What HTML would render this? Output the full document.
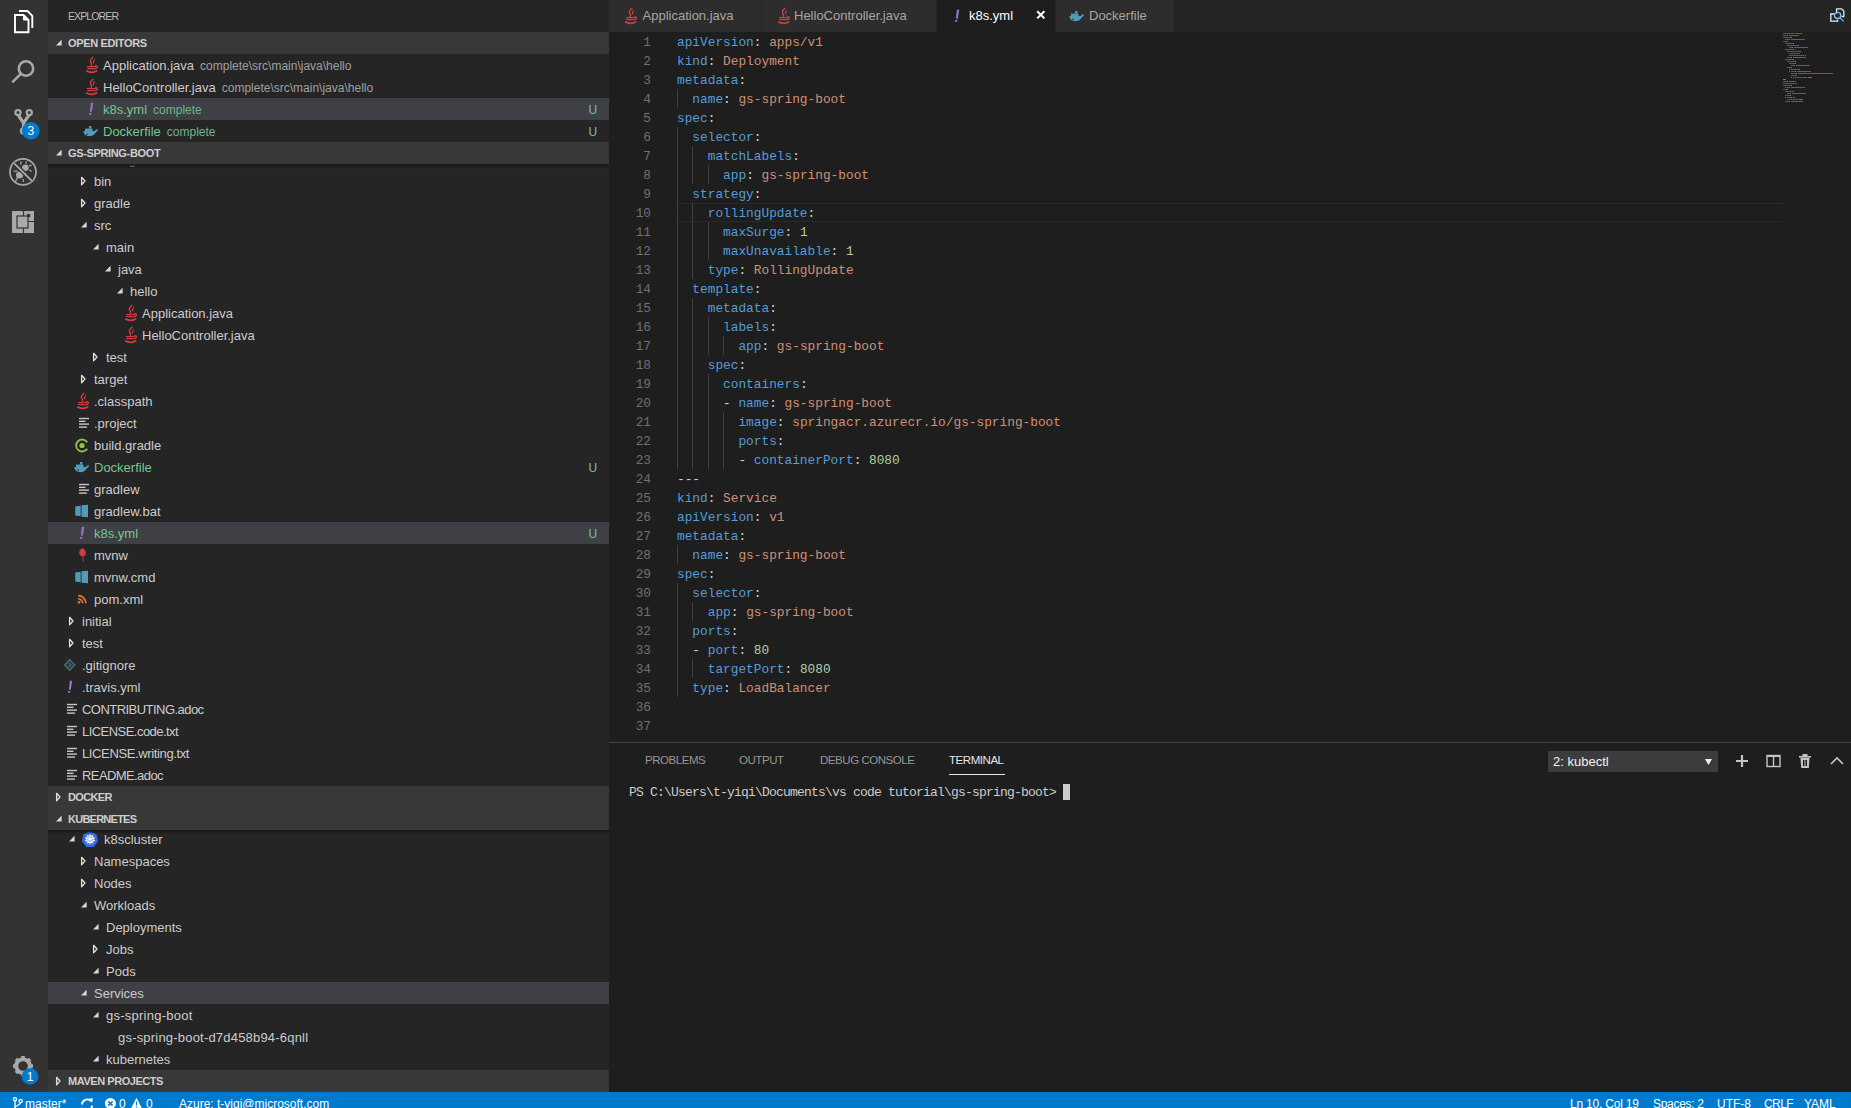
<!DOCTYPE html><html><head><meta charset="utf-8"><style>
*{margin:0;padding:0;box-sizing:border-box}
html,body{width:1851px;height:1108px;overflow:hidden;background:#1e1e1e;font-family:"Liberation Sans",sans-serif}
#act{position:absolute;left:0;top:0;width:48px;height:1092px;background:#333333}
#side{position:absolute;left:48px;top:0;width:561px;height:1092px;background:#252526;overflow:hidden}
#editor{position:absolute;left:609px;top:0;width:1242px;height:1092px;background:#1e1e1e;overflow:hidden}
#status{position:absolute;left:0;top:1092px;width:1851px;height:22px;background:#007acc;color:#fff;font-size:12px;white-space:nowrap}
#status span{position:absolute;top:1px;line-height:22px}
.title{position:absolute;left:20px;top:0;height:32px;line-height:32px;font-size:10.6px;color:#bbbbbb;letter-spacing:-0.95px}
.sh{position:absolute;left:0;width:561px;height:22px;line-height:22px;background:#383838;color:#cfcfcf;font-weight:bold;font-size:11px;letter-spacing:-0.35px}
.sh span{position:absolute;left:20px}
.clip{position:absolute;left:0;width:561px;overflow:hidden}
.row{position:absolute;left:0;width:561px;height:22px;line-height:22px;font-size:13px;color:#cccccc;white-space:nowrap}
.row.sel{background:#3f3f46}
.row .t{position:absolute;top:1px}
.d{font-size:12px;color:#a0a0a0;margin-left:6px}
.gr{color:#73c991}
.gr .d{color:#6fb58a}
.u{position:absolute;left:540.5px;top:1px;font-size:12px;color:#73c991}
svg{position:absolute;overflow:visible}
.tab{position:absolute;top:0;height:32px;background:#2d2d2d;border-right:1px solid #252526;font-size:13px;color:#a6a6a6;line-height:32px;white-space:nowrap}
.tab.act{background:#1e1e1e;color:#ffffff}
.code{position:absolute;left:68px;font-family:"Liberation Mono",monospace;font-size:12.8px;white-space:pre;color:#d4d4d4;padding-top:1px}
.ln{position:absolute;left:0;width:42px;text-align:right;font-family:"Liberation Mono",monospace;font-size:12.8px;color:#707070;padding-top:1px}
.k{color:#569cd6}.s{color:#ce9178}.n{color:#b5cea8}.p{color:#d4d4d4}
.ptab{position:absolute;top:0;height:36px;line-height:36px;font-size:11.5px;letter-spacing:-0.45px;color:#969696}
</style></head><body><div id="act"><svg style="left:0;top:0px" width="48" height="48"><g fill="none" stroke="#ffffff" stroke-width="1.9"><path d="M15 15 L23.5 15 L28.5 20 L28.5 32.2 L15 32.2 Z"/><path d="M23.5 15 L23.5 20 L28.5 20" fill="#ffffff" stroke-width="1"/><path d="M19 11 L27.5 11 L32.3 15.8 L32.3 28"/></g></svg><svg style="left:0;top:48px" width="48" height="48"><g fill="none" stroke="#a9a9a9" stroke-width="2.6"><circle cx="26" cy="20.5" r="7.2"/><path d="M20.8 25.8 L13 33.6" stroke-linecap="round"/></g></svg><svg style="left:0;top:96px" width="48" height="48"><g fill="none" stroke="#a9a9a9" stroke-width="2.2"><circle cx="18" cy="16.6" r="2.6"/><circle cx="29.3" cy="16.6" r="2.6"/><circle cx="23.5" cy="35" r="2.6"/><path d="M18.5 19.5 L23.5 27 L28.8 19.5 M23.5 27 L23.5 32.3" stroke-width="3.2"/></g><circle cx="30.8" cy="34.8" r="8.8" fill="#007acc"/><text x="30.8" y="39.2" text-anchor="middle" font-family="Liberation Sans" font-size="12" fill="#ffffff">3</text></svg><svg style="left:0;top:144px" width="48" height="48"><circle cx="23" cy="27.9" r="13" fill="none" stroke="#a9a9a9" stroke-width="1.7"/><g fill="#a9a9a9"><circle cx="19.6" cy="31" r="3.6"/><circle cx="25.4" cy="23.8" r="3.3"/></g><g fill="none" stroke="#a9a9a9" stroke-width="1.3"><path d="M13.5 27.2 L17.5 27.2 M15.5 37.5 L17.5 33.5 M20.8 20.5 L20.8 17.5 M26 19.5 L26.5 17.5 M29 21.5 L31.5 21.5 M29.5 26 L31.5 27.5 M23 35 L23.5 38"/></g><path d="M14.2 19.3 L31.8 36.8" stroke="#333333" stroke-width="4.2"/><path d="M14.2 19.3 L31.8 36.8" stroke="#a9a9a9" stroke-width="1.9"/></svg><svg style="left:0;top:192px" width="48" height="48"><rect x="12" y="19" width="22" height="22" fill="#a9a9a9"/><path d="M23.5 19 L23.5 41 M23.5 29.5 L34 29.5" stroke="#333333" stroke-width="1.2"/><rect x="17" y="24" width="11" height="12" fill="#a9a9a9" stroke="#333333" stroke-width="1.2"/><rect x="27" y="22" width="3.2" height="3.2" fill="#333333"/></svg><svg style="left:0;top:1044px" width="48" height="48"><g transform="translate(23,22)"><circle r="6.8" fill="none" stroke="#a9a9a9" stroke-width="4"/><rect x="-1.8" y="-10" width="3.6" height="4" fill="#a9a9a9" transform="rotate(0)"/><rect x="-1.8" y="-10" width="3.6" height="4" fill="#a9a9a9" transform="rotate(45)"/><rect x="-1.8" y="-10" width="3.6" height="4" fill="#a9a9a9" transform="rotate(90)"/><rect x="-1.8" y="-10" width="3.6" height="4" fill="#a9a9a9" transform="rotate(135)"/><rect x="-1.8" y="-10" width="3.6" height="4" fill="#a9a9a9" transform="rotate(180)"/><rect x="-1.8" y="-10" width="3.6" height="4" fill="#a9a9a9" transform="rotate(225)"/><rect x="-1.8" y="-10" width="3.6" height="4" fill="#a9a9a9" transform="rotate(270)"/><rect x="-1.8" y="-10" width="3.6" height="4" fill="#a9a9a9" transform="rotate(315)"/></g><circle cx="30" cy="32.5" r="8.3" fill="#007acc"/><text x="30" y="37" text-anchor="middle" font-family="Liberation Sans" font-size="12" fill="#ffffff">1</text></svg></div><div id="side"><div class="title">EXPLORER</div><div class="sh" style="top:32px;letter-spacing:-0.35px"><svg style="left:8px;top:0px" width="8" height="22"><path d="M0 13.4 L5.6 13.4 L5.6 7.8 Z" fill="#d8d8d8"/></svg><span>OPEN EDITORS</span></div><div class="row" style="top:54px"><svg style="left:35px;top:0px" width="16" height="22" viewBox="0 0 16 22"><g fill="none" stroke="#cc3e44" stroke-linecap="round"><path d="M10 3.2 C7 5.5 6.8 7.3 8.1 9 C8.9 10 8.7 10.8 8.3 11.3" stroke-width="1.4"/><path d="M11.6 5.8 C10.2 6.8 10.8 7.8 10.4 9" stroke-width="1.1"/><path d="M4.4 12.6 L12.8 12.6" stroke-width="1.3"/><path d="M12.6 11.6 C15.2 11.4 15.1 14.2 12.2 14.8" stroke-width="1.2"/><path d="M4.8 14.6 L11 14.6" stroke-width="1.3"/><path d="M3.6 17.1 C6 18.5 10.5 18.5 13.6 16.9" stroke-width="1.7"/></g></svg><span class="t" style="left:55px;letter-spacing:0px">Application.java<span class="d">complete\src\main\java\hello</span></span></div><div class="row" style="top:76px"><svg style="left:35px;top:0px" width="16" height="22" viewBox="0 0 16 22"><g fill="none" stroke="#cc3e44" stroke-linecap="round"><path d="M10 3.2 C7 5.5 6.8 7.3 8.1 9 C8.9 10 8.7 10.8 8.3 11.3" stroke-width="1.4"/><path d="M11.6 5.8 C10.2 6.8 10.8 7.8 10.4 9" stroke-width="1.1"/><path d="M4.4 12.6 L12.8 12.6" stroke-width="1.3"/><path d="M12.6 11.6 C15.2 11.4 15.1 14.2 12.2 14.8" stroke-width="1.2"/><path d="M4.8 14.6 L11 14.6" stroke-width="1.3"/><path d="M3.6 17.1 C6 18.5 10.5 18.5 13.6 16.9" stroke-width="1.7"/></g></svg><span class="t" style="left:55px;letter-spacing:0px">HelloController.java<span class="d">complete\src\main\java\hello</span></span></div><div class="row sel" style="top:98px"><svg style="left:35px;top:0px" width="16" height="22" viewBox="0 0 16 22"><path d="M7.9 4.8 L10.3 4.8 L8.7 13.8 L6.9 13.8 Z" fill="#a074c4"/><path d="M6.3 14.9 L8.4 14.9 L8.1 16.8 L6 16.8 Z" fill="#a074c4"/></svg><span class="t gr" style="left:55px;letter-spacing:0px">k8s.yml<span class="d">complete</span></span><span class="u">U</span></div><div class="row" style="top:120px"><svg style="left:35px;top:0px" width="16" height="22" viewBox="0 0 16 22"><path d="M0.3 11 L12 11 C12.3 10 13.2 9.2 15.2 9.4 C14.8 10.4 14.2 11.4 13.2 11.9 C11.6 15 8.5 16.4 5 16.1 C2 15.8 0.6 13.6 0.3 11 Z" fill="#519aba"/><rect x="2" y="8.6" width="7.5" height="2.4" fill="#519aba"/><rect x="6" y="6" width="2.4" height="2.6" fill="#519aba"/><circle cx="4" cy="14.3" r="0.8" fill="#252526"/></svg><span class="t gr" style="left:55px;letter-spacing:0px">Dockerfile<span class="d">complete</span></span><span class="u">U</span></div><div class="sh" style="top:142px;letter-spacing:-0.35px"><svg style="left:8px;top:0px" width="8" height="22"><path d="M0 13.4 L5.6 13.4 L5.6 7.8 Z" fill="#d8d8d8"/></svg><span>GS-SPRING-BOOT</span></div><div class="clip" style="top:164px;height:622px"><div class="row" style="top:-16px"><svg style="left:33px;top:0px" width="8" height="22"><path d="M0.6 7.3 L4 11 L0.6 14.7 Z" fill="none" stroke="#e0e0e0" stroke-width="1.3" stroke-linejoin="round"/></svg><span class="t" style="left:46px;letter-spacing:0px">.settings</span></div><div class="row" style="top:6px"><svg style="left:33px;top:0px" width="8" height="22"><path d="M0.6 7.3 L4 11 L0.6 14.7 Z" fill="none" stroke="#e0e0e0" stroke-width="1.3" stroke-linejoin="round"/></svg><span class="t" style="left:46px;letter-spacing:0px">bin</span></div><div class="row" style="top:28px"><svg style="left:33px;top:0px" width="8" height="22"><path d="M0.6 7.3 L4 11 L0.6 14.7 Z" fill="none" stroke="#e0e0e0" stroke-width="1.3" stroke-linejoin="round"/></svg><span class="t" style="left:46px;letter-spacing:0px">gradle</span></div><div class="row" style="top:50px"><svg style="left:33px;top:0px" width="8" height="22"><path d="M0 13.4 L5.6 13.4 L5.6 7.8 Z" fill="#d8d8d8"/></svg><span class="t" style="left:46px;letter-spacing:0px">src</span></div><div class="row" style="top:72px"><svg style="left:45px;top:0px" width="8" height="22"><path d="M0 13.4 L5.6 13.4 L5.6 7.8 Z" fill="#d8d8d8"/></svg><span class="t" style="left:58px;letter-spacing:0px">main</span></div><div class="row" style="top:94px"><svg style="left:57px;top:0px" width="8" height="22"><path d="M0 13.4 L5.6 13.4 L5.6 7.8 Z" fill="#d8d8d8"/></svg><span class="t" style="left:70px;letter-spacing:0px">java</span></div><div class="row" style="top:116px"><svg style="left:69px;top:0px" width="8" height="22"><path d="M0 13.4 L5.6 13.4 L5.6 7.8 Z" fill="#d8d8d8"/></svg><span class="t" style="left:82px;letter-spacing:0px">hello</span></div><div class="row" style="top:138px"><svg style="left:74px;top:0px" width="16" height="22" viewBox="0 0 16 22"><g fill="none" stroke="#cc3e44" stroke-linecap="round"><path d="M10 3.2 C7 5.5 6.8 7.3 8.1 9 C8.9 10 8.7 10.8 8.3 11.3" stroke-width="1.4"/><path d="M11.6 5.8 C10.2 6.8 10.8 7.8 10.4 9" stroke-width="1.1"/><path d="M4.4 12.6 L12.8 12.6" stroke-width="1.3"/><path d="M12.6 11.6 C15.2 11.4 15.1 14.2 12.2 14.8" stroke-width="1.2"/><path d="M4.8 14.6 L11 14.6" stroke-width="1.3"/><path d="M3.6 17.1 C6 18.5 10.5 18.5 13.6 16.9" stroke-width="1.7"/></g></svg><span class="t" style="left:94px;letter-spacing:0px">Application.java</span></div><div class="row" style="top:160px"><svg style="left:74px;top:0px" width="16" height="22" viewBox="0 0 16 22"><g fill="none" stroke="#cc3e44" stroke-linecap="round"><path d="M10 3.2 C7 5.5 6.8 7.3 8.1 9 C8.9 10 8.7 10.8 8.3 11.3" stroke-width="1.4"/><path d="M11.6 5.8 C10.2 6.8 10.8 7.8 10.4 9" stroke-width="1.1"/><path d="M4.4 12.6 L12.8 12.6" stroke-width="1.3"/><path d="M12.6 11.6 C15.2 11.4 15.1 14.2 12.2 14.8" stroke-width="1.2"/><path d="M4.8 14.6 L11 14.6" stroke-width="1.3"/><path d="M3.6 17.1 C6 18.5 10.5 18.5 13.6 16.9" stroke-width="1.7"/></g></svg><span class="t" style="left:94px;letter-spacing:0px">HelloController.java</span></div><div class="row" style="top:182px"><svg style="left:45px;top:0px" width="8" height="22"><path d="M0.6 7.3 L4 11 L0.6 14.7 Z" fill="none" stroke="#e0e0e0" stroke-width="1.3" stroke-linejoin="round"/></svg><span class="t" style="left:58px;letter-spacing:0px">test</span></div><div class="row" style="top:204px"><svg style="left:33px;top:0px" width="8" height="22"><path d="M0.6 7.3 L4 11 L0.6 14.7 Z" fill="none" stroke="#e0e0e0" stroke-width="1.3" stroke-linejoin="round"/></svg><span class="t" style="left:46px;letter-spacing:0px">target</span></div><div class="row" style="top:226px"><svg style="left:26px;top:0px" width="16" height="22" viewBox="0 0 16 22"><g fill="none" stroke="#cc3e44" stroke-linecap="round"><path d="M10 3.2 C7 5.5 6.8 7.3 8.1 9 C8.9 10 8.7 10.8 8.3 11.3" stroke-width="1.4"/><path d="M11.6 5.8 C10.2 6.8 10.8 7.8 10.4 9" stroke-width="1.1"/><path d="M4.4 12.6 L12.8 12.6" stroke-width="1.3"/><path d="M12.6 11.6 C15.2 11.4 15.1 14.2 12.2 14.8" stroke-width="1.2"/><path d="M4.8 14.6 L11 14.6" stroke-width="1.3"/><path d="M3.6 17.1 C6 18.5 10.5 18.5 13.6 16.9" stroke-width="1.7"/></g></svg><span class="t" style="left:46px;letter-spacing:0px">.classpath</span></div><div class="row" style="top:248px"><svg style="left:26px;top:0px" width="16" height="22" viewBox="0 0 16 22"><g fill="#c5c5c5"><rect x="5" y="5.8" width="10" height="1.4"/><rect x="5" y="8.6" width="6.5" height="1.4"/><rect x="5" y="11.4" width="10" height="1.4"/><rect x="5" y="14.4" width="8" height="1.4"/></g></svg><span class="t" style="left:46px;letter-spacing:0px">.project</span></div><div class="row" style="top:270px"><svg style="left:26px;top:0px" width="16" height="22" viewBox="0 0 16 22"><path d="M13.2 8.3 A6 6 0 1 0 13.2 14.7" fill="none" stroke="#8dc149" stroke-width="1.8"/><circle cx="8" cy="11.5" r="2.6" fill="#8dc149"/></svg><span class="t" style="left:46px;letter-spacing:0px">build.gradle</span></div><div class="row" style="top:292px"><svg style="left:26px;top:0px" width="16" height="22" viewBox="0 0 16 22"><path d="M0.3 11 L12 11 C12.3 10 13.2 9.2 15.2 9.4 C14.8 10.4 14.2 11.4 13.2 11.9 C11.6 15 8.5 16.4 5 16.1 C2 15.8 0.6 13.6 0.3 11 Z" fill="#519aba"/><rect x="2" y="8.6" width="7.5" height="2.4" fill="#519aba"/><rect x="6" y="6" width="2.4" height="2.6" fill="#519aba"/><circle cx="4" cy="14.3" r="0.8" fill="#252526"/></svg><span class="t gr" style="left:46px;letter-spacing:0px">Dockerfile</span><span class="u">U</span></div><div class="row" style="top:314px"><svg style="left:26px;top:0px" width="16" height="22" viewBox="0 0 16 22"><g fill="#c5c5c5"><rect x="5" y="5.8" width="10" height="1.4"/><rect x="5" y="8.6" width="6.5" height="1.4"/><rect x="5" y="11.4" width="10" height="1.4"/><rect x="5" y="14.4" width="8" height="1.4"/></g></svg><span class="t" style="left:46px;letter-spacing:0px">gradlew</span></div><div class="row" style="top:336px"><svg style="left:26px;top:0px" width="16" height="22" viewBox="0 0 16 22"><g fill="#519aba"><path d="M1.2 6.5 L6.7 5.8 L6.7 16.2 L1.2 15.5 Z"/><path d="M7.5 5.2 L14 4.8 L14 17.2 L7.5 16.8 Z"/></g></svg><span class="t" style="left:46px;letter-spacing:0px">gradlew.bat</span></div><div class="row sel" style="top:358px"><svg style="left:26px;top:0px" width="16" height="22" viewBox="0 0 16 22"><path d="M7.9 4.8 L10.3 4.8 L8.7 13.8 L6.9 13.8 Z" fill="#a074c4"/><path d="M6.3 14.9 L8.4 14.9 L8.1 16.8 L6 16.8 Z" fill="#a074c4"/></svg><span class="t gr" style="left:46px;letter-spacing:0px">k8s.yml</span><span class="u">U</span></div><div class="row" style="top:380px"><svg style="left:26px;top:0px" width="16" height="22" viewBox="0 0 16 22"><path d="M8.5 4 C10.5 5 12 7 11.8 9.5 C11.6 11.2 10.2 12.2 9.2 12.6 L9.8 17.8 L9 17.8 L8.3 12.6 C6.8 12 5.2 10.8 5.2 8.8 C5.2 6.5 7 5 8.5 4 Z" fill="#cc3e44"/></svg><span class="t" style="left:46px;letter-spacing:0px">mvnw</span></div><div class="row" style="top:402px"><svg style="left:26px;top:0px" width="16" height="22" viewBox="0 0 16 22"><g fill="#519aba"><path d="M1.2 6.5 L6.7 5.8 L6.7 16.2 L1.2 15.5 Z"/><path d="M7.5 5.2 L14 4.8 L14 17.2 L7.5 16.8 Z"/></g></svg><span class="t" style="left:46px;letter-spacing:0px">mvnw.cmd</span></div><div class="row" style="top:424px"><svg style="left:26px;top:0px" width="16" height="22" viewBox="0 0 16 22"><g fill="none" stroke="#e37933" stroke-width="1.7"><path d="M4.2 7.6 A7.6 7.6 0 0 1 11.8 15.2"/><path d="M4.2 10.8 A4.4 4.4 0 0 1 8.6 15.2"/></g><circle cx="5" cy="14.2" r="1.3" fill="#e37933"/></svg><span class="t" style="left:46px;letter-spacing:0px">pom.xml</span></div><div class="row" style="top:446px"><svg style="left:21px;top:0px" width="8" height="22"><path d="M0.6 7.3 L4 11 L0.6 14.7 Z" fill="none" stroke="#e0e0e0" stroke-width="1.3" stroke-linejoin="round"/></svg><span class="t" style="left:34px;letter-spacing:0px">initial</span></div><div class="row" style="top:468px"><svg style="left:21px;top:0px" width="8" height="22"><path d="M0.6 7.3 L4 11 L0.6 14.7 Z" fill="none" stroke="#e0e0e0" stroke-width="1.3" stroke-linejoin="round"/></svg><span class="t" style="left:34px;letter-spacing:0px">test</span></div><div class="row" style="top:490px"><svg style="left:14px;top:0px" width="16" height="22" viewBox="0 0 16 22"><path d="M7.7 5.6 L13 10.9 L7.7 16.2 L2.4 10.9 Z" fill="#2f3f46" stroke="#56707a" stroke-width="1.1"/><path d="M6.5 9 L9 11 L6.5 13" fill="none" stroke="#56707a" stroke-width="0.9"/></svg><span class="t" style="left:34px;letter-spacing:0px">.gitignore</span></div><div class="row" style="top:512px"><svg style="left:14px;top:0px" width="16" height="22" viewBox="0 0 16 22"><path d="M7.9 4.8 L10.3 4.8 L8.7 13.8 L6.9 13.8 Z" fill="#a074c4"/><path d="M6.3 14.9 L8.4 14.9 L8.1 16.8 L6 16.8 Z" fill="#a074c4"/></svg><span class="t" style="left:34px;letter-spacing:0px">.travis.yml</span></div><div class="row" style="top:534px"><svg style="left:14px;top:0px" width="16" height="22" viewBox="0 0 16 22"><g fill="#c5c5c5"><rect x="5" y="5.8" width="10" height="1.4"/><rect x="5" y="8.6" width="6.5" height="1.4"/><rect x="5" y="11.4" width="10" height="1.4"/><rect x="5" y="14.4" width="8" height="1.4"/></g></svg><span class="t" style="left:34px;letter-spacing:-0.54px">CONTRIBUTING.adoc</span></div><div class="row" style="top:556px"><svg style="left:14px;top:0px" width="16" height="22" viewBox="0 0 16 22"><g fill="#c5c5c5"><rect x="5" y="5.8" width="10" height="1.4"/><rect x="5" y="8.6" width="6.5" height="1.4"/><rect x="5" y="11.4" width="10" height="1.4"/><rect x="5" y="14.4" width="8" height="1.4"/></g></svg><span class="t" style="left:34px;letter-spacing:-0.54px">LICENSE.code.txt</span></div><div class="row" style="top:578px"><svg style="left:14px;top:0px" width="16" height="22" viewBox="0 0 16 22"><g fill="#c5c5c5"><rect x="5" y="5.8" width="10" height="1.4"/><rect x="5" y="8.6" width="6.5" height="1.4"/><rect x="5" y="11.4" width="10" height="1.4"/><rect x="5" y="14.4" width="8" height="1.4"/></g></svg><span class="t" style="left:34px;letter-spacing:-0.37px">LICENSE.writing.txt</span></div><div class="row" style="top:600px"><svg style="left:14px;top:0px" width="16" height="22" viewBox="0 0 16 22"><g fill="#c5c5c5"><rect x="5" y="5.8" width="10" height="1.4"/><rect x="5" y="8.6" width="6.5" height="1.4"/><rect x="5" y="11.4" width="10" height="1.4"/><rect x="5" y="14.4" width="8" height="1.4"/></g></svg><span class="t" style="left:34px;letter-spacing:-0.59px">README.adoc</span></div></div><div class="abs" style="position:absolute;left:0;top:164px;width:561px;height:5px;background:linear-gradient(#161616,rgba(37,37,38,0))"></div><div class="sh" style="top:786px;letter-spacing:-0.65px"><svg style="left:8px;top:0px" width="8" height="22"><path d="M0.6 7.3 L4 11 L0.6 14.7 Z" fill="none" stroke="#e0e0e0" stroke-width="1.3" stroke-linejoin="round"/></svg><span>DOCKER</span></div><div class="sh" style="top:808px;letter-spacing:-0.75px"><svg style="left:8px;top:0px" width="8" height="22"><path d="M0 13.4 L5.6 13.4 L5.6 7.8 Z" fill="#d8d8d8"/></svg><span>KUBERNETES</span></div><div class="clip" style="top:830px;height:240px"><div class="row" style="top:-2px"><svg style="left:21px;top:0px" width="8" height="22"><path d="M0 13.4 L5.6 13.4 L5.6 7.8 Z" fill="#d8d8d8"/></svg><svg style="left:33px;top:0px" width="18" height="22" viewBox="0 0 18 22"><path d="M9 3.2 L15.5 6.3 L17.1 13.3 L12.6 18.9 L5.4 18.9 L0.9 13.3 L2.5 6.3 Z" fill="#326ce5"/><g fill="none" stroke="#ffffff" stroke-width="1"><circle cx="9" cy="11.3" r="3.6"/><path d="M9 6 L9 16.6 M4 9.7 L14 12.9 M4 12.9 L14 9.7 M6 7 L12 15.6 M12 7 L6 15.6"/></g></svg><span class="t" style="left:56px;letter-spacing:0px">k8scluster</span></div><div class="row" style="top:20px"><svg style="left:33px;top:0px" width="8" height="22"><path d="M0.6 7.3 L4 11 L0.6 14.7 Z" fill="none" stroke="#e0e0e0" stroke-width="1.3" stroke-linejoin="round"/></svg><span class="t" style="left:46px;letter-spacing:0px">Namespaces</span></div><div class="row" style="top:42px"><svg style="left:33px;top:0px" width="8" height="22"><path d="M0.6 7.3 L4 11 L0.6 14.7 Z" fill="none" stroke="#e0e0e0" stroke-width="1.3" stroke-linejoin="round"/></svg><span class="t" style="left:46px;letter-spacing:0px">Nodes</span></div><div class="row" style="top:64px"><svg style="left:33px;top:0px" width="8" height="22"><path d="M0 13.4 L5.6 13.4 L5.6 7.8 Z" fill="#d8d8d8"/></svg><span class="t" style="left:46px;letter-spacing:0px">Workloads</span></div><div class="row" style="top:86px"><svg style="left:45px;top:0px" width="8" height="22"><path d="M0 13.4 L5.6 13.4 L5.6 7.8 Z" fill="#d8d8d8"/></svg><span class="t" style="left:58px;letter-spacing:0px">Deployments</span></div><div class="row" style="top:108px"><svg style="left:45px;top:0px" width="8" height="22"><path d="M0.6 7.3 L4 11 L0.6 14.7 Z" fill="none" stroke="#e0e0e0" stroke-width="1.3" stroke-linejoin="round"/></svg><span class="t" style="left:58px;letter-spacing:0px">Jobs</span></div><div class="row" style="top:130px"><svg style="left:45px;top:0px" width="8" height="22"><path d="M0 13.4 L5.6 13.4 L5.6 7.8 Z" fill="#d8d8d8"/></svg><span class="t" style="left:58px;letter-spacing:0px">Pods</span></div><div class="row sel" style="top:152px"><svg style="left:33px;top:0px" width="8" height="22"><path d="M0 13.4 L5.6 13.4 L5.6 7.8 Z" fill="#d8d8d8"/></svg><span class="t" style="left:46px;letter-spacing:0px">Services</span></div><div class="row" style="top:174px"><svg style="left:45px;top:0px" width="8" height="22"><path d="M0 13.4 L5.6 13.4 L5.6 7.8 Z" fill="#d8d8d8"/></svg><span class="t" style="left:58px;letter-spacing:0.25px">gs-spring-boot</span></div><div class="row" style="top:196px"><span class="t" style="left:70px;letter-spacing:0.2px">gs-spring-boot-d7d458b94-6qnll</span></div><div class="row" style="top:218px"><svg style="left:45px;top:0px" width="8" height="22"><path d="M0 13.4 L5.6 13.4 L5.6 7.8 Z" fill="#d8d8d8"/></svg><span class="t" style="left:58px;letter-spacing:0px">kubernetes</span></div></div><div style="position:absolute;left:0;top:830px;width:561px;height:4px;background:linear-gradient(#171717,rgba(37,37,38,0))"></div><div class="sh" style="top:1070px;letter-spacing:-0.45px"><svg style="left:8px;top:0px" width="8" height="22"><path d="M0.6 7.3 L4 11 L0.6 14.7 Z" fill="none" stroke="#e0e0e0" stroke-width="1.3" stroke-linejoin="round"/></svg><span>MAVEN PROJECTS</span></div></div><div id="editor"><div style="position:absolute;left:0;top:0;width:1242px;height:32px;background:#252526"></div><div class="tab" style="left:0px;width:153px"><svg style="left:13px;top:5px" width="16" height="22" viewBox="0 0 16 22"><g fill="none" stroke="#cc3e44" stroke-linecap="round"><path d="M10 3.2 C7 5.5 6.8 7.3 8.1 9 C8.9 10 8.7 10.8 8.3 11.3" stroke-width="1.4"/><path d="M11.6 5.8 C10.2 6.8 10.8 7.8 10.4 9" stroke-width="1.1"/><path d="M4.4 12.6 L12.8 12.6" stroke-width="1.3"/><path d="M12.6 11.6 C15.2 11.4 15.1 14.2 12.2 14.8" stroke-width="1.2"/><path d="M4.8 14.6 L11 14.6" stroke-width="1.3"/><path d="M3.6 17.1 C6 18.5 10.5 18.5 13.6 16.9" stroke-width="1.7"/></g></svg><span style="position:absolute;left:33.5px;top:0">Application.java</span></div><div class="tab" style="left:153px;width:175px"><svg style="left:13px;top:5px" width="16" height="22" viewBox="0 0 16 22"><g fill="none" stroke="#cc3e44" stroke-linecap="round"><path d="M10 3.2 C7 5.5 6.8 7.3 8.1 9 C8.9 10 8.7 10.8 8.3 11.3" stroke-width="1.4"/><path d="M11.6 5.8 C10.2 6.8 10.8 7.8 10.4 9" stroke-width="1.1"/><path d="M4.4 12.6 L12.8 12.6" stroke-width="1.3"/><path d="M12.6 11.6 C15.2 11.4 15.1 14.2 12.2 14.8" stroke-width="1.2"/><path d="M4.8 14.6 L11 14.6" stroke-width="1.3"/><path d="M3.6 17.1 C6 18.5 10.5 18.5 13.6 16.9" stroke-width="1.7"/></g></svg><span style="position:absolute;left:32px;top:0">HelloController.java</span></div><div class="tab act" style="left:328px;width:119px"><svg style="left:12px;top:5px" width="16" height="22" viewBox="0 0 16 22"><path d="M7.9 4.8 L10.3 4.8 L8.7 13.8 L6.9 13.8 Z" fill="#a074c4"/><path d="M6.3 14.9 L8.4 14.9 L8.1 16.8 L6 16.8 Z" fill="#a074c4"/></svg><span style="position:absolute;left:32px;top:0">k8s.yml</span><svg style="left:99px;top:0" width="20" height="32"><path d="M1.2 11.2 L8.4 18.4 M8.4 11.2 L1.2 18.4" stroke="#ffffff" stroke-width="2"/></svg></div><div class="tab" style="left:447px;width:119px"><svg style="left:13px;top:5px" width="16" height="22" viewBox="0 0 16 22"><path d="M0.3 11 L12 11 C12.3 10 13.2 9.2 15.2 9.4 C14.8 10.4 14.2 11.4 13.2 11.9 C11.6 15 8.5 16.4 5 16.1 C2 15.8 0.6 13.6 0.3 11 Z" fill="#519aba"/><rect x="2" y="8.6" width="7.5" height="2.4" fill="#519aba"/><rect x="6" y="6" width="2.4" height="2.6" fill="#519aba"/><circle cx="4" cy="14.3" r="0.8" fill="#252526"/></svg><span style="position:absolute;left:33px;top:0">Dockerfile</span></div><svg style="left:1216px;top:0" width="30" height="32"><g fill="none" stroke="#e8e8e8" stroke-width="1.3"><path d="M11.6 13.5 L11.6 8.9 L16.6 8.9 L18.8 11.1 L18.8 16.5 L16.5 16.5"/><path d="M9.5 14 L5.8 14 L5.8 21.2 L12.6 21.2 L12.6 19.5"/></g><g fill="none" stroke="#75beff" stroke-width="1.3"><circle cx="12.6" cy="15.4" r="3.1"/><path d="M14.8 17.6 L18.6 21.4"/></g></svg><div style="position:absolute;left:68px;top:203px;width:1106px;height:19px;border-top:1px solid #282828;border-bottom:1px solid #282828"></div><div style="position:absolute;left:68.0px;top:89px;width:1px;height:19px;background:#404040"></div><div style="position:absolute;left:68.0px;top:127px;width:1px;height:19px;background:#404040"></div><div style="position:absolute;left:68.0px;top:146px;width:1px;height:19px;background:#404040"></div><div style="position:absolute;left:83.4px;top:146px;width:1px;height:19px;background:#404040"></div><div style="position:absolute;left:68.0px;top:165px;width:1px;height:19px;background:#404040"></div><div style="position:absolute;left:83.4px;top:165px;width:1px;height:19px;background:#404040"></div><div style="position:absolute;left:98.8px;top:165px;width:1px;height:19px;background:#404040"></div><div style="position:absolute;left:68.0px;top:184px;width:1px;height:19px;background:#404040"></div><div style="position:absolute;left:68.0px;top:203px;width:1px;height:19px;background:#404040"></div><div style="position:absolute;left:83.4px;top:203px;width:1px;height:19px;background:#404040"></div><div style="position:absolute;left:68.0px;top:222px;width:1px;height:19px;background:#404040"></div><div style="position:absolute;left:83.4px;top:222px;width:1px;height:19px;background:#404040"></div><div style="position:absolute;left:98.8px;top:222px;width:1px;height:19px;background:#404040"></div><div style="position:absolute;left:68.0px;top:241px;width:1px;height:19px;background:#404040"></div><div style="position:absolute;left:83.4px;top:241px;width:1px;height:19px;background:#404040"></div><div style="position:absolute;left:98.8px;top:241px;width:1px;height:19px;background:#404040"></div><div style="position:absolute;left:68.0px;top:260px;width:1px;height:19px;background:#404040"></div><div style="position:absolute;left:83.4px;top:260px;width:1px;height:19px;background:#404040"></div><div style="position:absolute;left:68.0px;top:279px;width:1px;height:19px;background:#404040"></div><div style="position:absolute;left:68.0px;top:298px;width:1px;height:19px;background:#404040"></div><div style="position:absolute;left:83.4px;top:298px;width:1px;height:19px;background:#404040"></div><div style="position:absolute;left:68.0px;top:317px;width:1px;height:19px;background:#404040"></div><div style="position:absolute;left:83.4px;top:317px;width:1px;height:19px;background:#404040"></div><div style="position:absolute;left:98.8px;top:317px;width:1px;height:19px;background:#404040"></div><div style="position:absolute;left:68.0px;top:336px;width:1px;height:19px;background:#404040"></div><div style="position:absolute;left:83.4px;top:336px;width:1px;height:19px;background:#404040"></div><div style="position:absolute;left:98.8px;top:336px;width:1px;height:19px;background:#404040"></div><div style="position:absolute;left:114.1px;top:336px;width:1px;height:19px;background:#404040"></div><div style="position:absolute;left:68.0px;top:355px;width:1px;height:19px;background:#404040"></div><div style="position:absolute;left:83.4px;top:355px;width:1px;height:19px;background:#404040"></div><div style="position:absolute;left:68.0px;top:374px;width:1px;height:19px;background:#404040"></div><div style="position:absolute;left:83.4px;top:374px;width:1px;height:19px;background:#404040"></div><div style="position:absolute;left:98.8px;top:374px;width:1px;height:19px;background:#404040"></div><div style="position:absolute;left:68.0px;top:393px;width:1px;height:19px;background:#404040"></div><div style="position:absolute;left:83.4px;top:393px;width:1px;height:19px;background:#404040"></div><div style="position:absolute;left:98.8px;top:393px;width:1px;height:19px;background:#404040"></div><div style="position:absolute;left:68.0px;top:412px;width:1px;height:19px;background:#404040"></div><div style="position:absolute;left:83.4px;top:412px;width:1px;height:19px;background:#404040"></div><div style="position:absolute;left:98.8px;top:412px;width:1px;height:19px;background:#404040"></div><div style="position:absolute;left:114.1px;top:412px;width:1px;height:19px;background:#404040"></div><div style="position:absolute;left:68.0px;top:431px;width:1px;height:19px;background:#404040"></div><div style="position:absolute;left:83.4px;top:431px;width:1px;height:19px;background:#404040"></div><div style="position:absolute;left:98.8px;top:431px;width:1px;height:19px;background:#404040"></div><div style="position:absolute;left:114.1px;top:431px;width:1px;height:19px;background:#404040"></div><div style="position:absolute;left:68.0px;top:450px;width:1px;height:19px;background:#404040"></div><div style="position:absolute;left:83.4px;top:450px;width:1px;height:19px;background:#404040"></div><div style="position:absolute;left:98.8px;top:450px;width:1px;height:19px;background:#404040"></div><div style="position:absolute;left:114.1px;top:450px;width:1px;height:19px;background:#404040"></div><div style="position:absolute;left:68.0px;top:545px;width:1px;height:19px;background:#404040"></div><div style="position:absolute;left:68.0px;top:583px;width:1px;height:19px;background:#404040"></div><div style="position:absolute;left:68.0px;top:602px;width:1px;height:19px;background:#404040"></div><div style="position:absolute;left:83.4px;top:602px;width:1px;height:19px;background:#404040"></div><div style="position:absolute;left:68.0px;top:621px;width:1px;height:19px;background:#404040"></div><div style="position:absolute;left:68.0px;top:640px;width:1px;height:19px;background:#404040"></div><div style="position:absolute;left:68.0px;top:659px;width:1px;height:19px;background:#404040"></div><div style="position:absolute;left:83.4px;top:659px;width:1px;height:19px;background:#404040"></div><div style="position:absolute;left:68.0px;top:678px;width:1px;height:19px;background:#404040"></div><div class="ln" style="top:32px;height:19px;line-height:19px">1</div><div class="code" style="top:32px;height:19px;line-height:19px"><span class="k">apiVersion</span><span class="p">: </span><span class="s">apps/v1</span></div><div class="ln" style="top:51px;height:19px;line-height:19px">2</div><div class="code" style="top:51px;height:19px;line-height:19px"><span class="k">kind</span><span class="p">: </span><span class="s">Deployment</span></div><div class="ln" style="top:70px;height:19px;line-height:19px">3</div><div class="code" style="top:70px;height:19px;line-height:19px"><span class="k">metadata</span><span class="p">:</span></div><div class="ln" style="top:89px;height:19px;line-height:19px">4</div><div class="code" style="top:89px;height:19px;line-height:19px"><span class="p">  </span><span class="k">name</span><span class="p">: </span><span class="s">gs-spring-boot</span></div><div class="ln" style="top:108px;height:19px;line-height:19px">5</div><div class="code" style="top:108px;height:19px;line-height:19px"><span class="k">spec</span><span class="p">:</span></div><div class="ln" style="top:127px;height:19px;line-height:19px">6</div><div class="code" style="top:127px;height:19px;line-height:19px"><span class="p">  </span><span class="k">selector</span><span class="p">:</span></div><div class="ln" style="top:146px;height:19px;line-height:19px">7</div><div class="code" style="top:146px;height:19px;line-height:19px"><span class="p">    </span><span class="k">matchLabels</span><span class="p">:</span></div><div class="ln" style="top:165px;height:19px;line-height:19px">8</div><div class="code" style="top:165px;height:19px;line-height:19px"><span class="p">      </span><span class="k">app</span><span class="p">: </span><span class="s">gs-spring-boot</span></div><div class="ln" style="top:184px;height:19px;line-height:19px">9</div><div class="code" style="top:184px;height:19px;line-height:19px"><span class="p">  </span><span class="k">strategy</span><span class="p">:</span></div><div class="ln" style="top:203px;height:19px;line-height:19px">10</div><div class="code" style="top:203px;height:19px;line-height:19px"><span class="p">    </span><span class="k">rollingUpdate</span><span class="p">:</span></div><div class="ln" style="top:222px;height:19px;line-height:19px">11</div><div class="code" style="top:222px;height:19px;line-height:19px"><span class="p">      </span><span class="k">maxSurge</span><span class="p">: </span><span class="n">1</span></div><div class="ln" style="top:241px;height:19px;line-height:19px">12</div><div class="code" style="top:241px;height:19px;line-height:19px"><span class="p">      </span><span class="k">maxUnavailable</span><span class="p">: </span><span class="n">1</span></div><div class="ln" style="top:260px;height:19px;line-height:19px">13</div><div class="code" style="top:260px;height:19px;line-height:19px"><span class="p">    </span><span class="k">type</span><span class="p">: </span><span class="s">RollingUpdate</span></div><div class="ln" style="top:279px;height:19px;line-height:19px">14</div><div class="code" style="top:279px;height:19px;line-height:19px"><span class="p">  </span><span class="k">template</span><span class="p">:</span></div><div class="ln" style="top:298px;height:19px;line-height:19px">15</div><div class="code" style="top:298px;height:19px;line-height:19px"><span class="p">    </span><span class="k">metadata</span><span class="p">:</span></div><div class="ln" style="top:317px;height:19px;line-height:19px">16</div><div class="code" style="top:317px;height:19px;line-height:19px"><span class="p">      </span><span class="k">labels</span><span class="p">:</span></div><div class="ln" style="top:336px;height:19px;line-height:19px">17</div><div class="code" style="top:336px;height:19px;line-height:19px"><span class="p">        </span><span class="k">app</span><span class="p">: </span><span class="s">gs-spring-boot</span></div><div class="ln" style="top:355px;height:19px;line-height:19px">18</div><div class="code" style="top:355px;height:19px;line-height:19px"><span class="p">    </span><span class="k">spec</span><span class="p">:</span></div><div class="ln" style="top:374px;height:19px;line-height:19px">19</div><div class="code" style="top:374px;height:19px;line-height:19px"><span class="p">      </span><span class="k">containers</span><span class="p">:</span></div><div class="ln" style="top:393px;height:19px;line-height:19px">20</div><div class="code" style="top:393px;height:19px;line-height:19px"><span class="p">      - </span><span class="k">name</span><span class="p">: </span><span class="s">gs-spring-boot</span></div><div class="ln" style="top:412px;height:19px;line-height:19px">21</div><div class="code" style="top:412px;height:19px;line-height:19px"><span class="p">        </span><span class="k">image</span><span class="p">: </span><span class="s">springacr.azurecr.io/gs-spring-boot</span></div><div class="ln" style="top:431px;height:19px;line-height:19px">22</div><div class="code" style="top:431px;height:19px;line-height:19px"><span class="p">        </span><span class="k">ports</span><span class="p">:</span></div><div class="ln" style="top:450px;height:19px;line-height:19px">23</div><div class="code" style="top:450px;height:19px;line-height:19px"><span class="p">        - </span><span class="k">containerPort</span><span class="p">: </span><span class="n">8080</span></div><div class="ln" style="top:469px;height:19px;line-height:19px">24</div><div class="code" style="top:469px;height:19px;line-height:19px"><span class="p">---</span></div><div class="ln" style="top:488px;height:19px;line-height:19px">25</div><div class="code" style="top:488px;height:19px;line-height:19px"><span class="k">kind</span><span class="p">: </span><span class="s">Service</span></div><div class="ln" style="top:507px;height:19px;line-height:19px">26</div><div class="code" style="top:507px;height:19px;line-height:19px"><span class="k">apiVersion</span><span class="p">: </span><span class="s">v1</span></div><div class="ln" style="top:526px;height:19px;line-height:19px">27</div><div class="code" style="top:526px;height:19px;line-height:19px"><span class="k">metadata</span><span class="p">:</span></div><div class="ln" style="top:545px;height:19px;line-height:19px">28</div><div class="code" style="top:545px;height:19px;line-height:19px"><span class="p">  </span><span class="k">name</span><span class="p">: </span><span class="s">gs-spring-boot</span></div><div class="ln" style="top:564px;height:19px;line-height:19px">29</div><div class="code" style="top:564px;height:19px;line-height:19px"><span class="k">spec</span><span class="p">:</span></div><div class="ln" style="top:583px;height:19px;line-height:19px">30</div><div class="code" style="top:583px;height:19px;line-height:19px"><span class="p">  </span><span class="k">selector</span><span class="p">:</span></div><div class="ln" style="top:602px;height:19px;line-height:19px">31</div><div class="code" style="top:602px;height:19px;line-height:19px"><span class="p">    </span><span class="k">app</span><span class="p">: </span><span class="s">gs-spring-boot</span></div><div class="ln" style="top:621px;height:19px;line-height:19px">32</div><div class="code" style="top:621px;height:19px;line-height:19px"><span class="p">  </span><span class="k">ports</span><span class="p">:</span></div><div class="ln" style="top:640px;height:19px;line-height:19px">33</div><div class="code" style="top:640px;height:19px;line-height:19px"><span class="p">  - </span><span class="k">port</span><span class="p">: </span><span class="n">80</span></div><div class="ln" style="top:659px;height:19px;line-height:19px">34</div><div class="code" style="top:659px;height:19px;line-height:19px"><span class="p">    </span><span class="k">targetPort</span><span class="p">: </span><span class="n">8080</span></div><div class="ln" style="top:678px;height:19px;line-height:19px">35</div><div class="code" style="top:678px;height:19px;line-height:19px"><span class="p">  </span><span class="k">type</span><span class="p">: </span><span class="s">LoadBalancer</span></div><div class="ln" style="top:697px;height:19px;line-height:19px">36</div><div class="ln" style="top:716px;height:19px;line-height:19px">37</div><div style="position:absolute;left:1174px;top:33px;width:10px;height:1px;background:#569cd6;opacity:0.5"></div><div style="position:absolute;left:1184px;top:33px;width:1px;height:1px;background:#d4d4d4;opacity:0.5"></div><div style="position:absolute;left:1186px;top:33px;width:7px;height:1px;background:#ce9178;opacity:0.5"></div><div style="position:absolute;left:1174px;top:35px;width:4px;height:1px;background:#569cd6;opacity:0.5"></div><div style="position:absolute;left:1178px;top:35px;width:1px;height:1px;background:#d4d4d4;opacity:0.5"></div><div style="position:absolute;left:1180px;top:35px;width:10px;height:1px;background:#ce9178;opacity:0.5"></div><div style="position:absolute;left:1174px;top:37px;width:8px;height:1px;background:#569cd6;opacity:0.5"></div><div style="position:absolute;left:1182px;top:37px;width:1px;height:1px;background:#d4d4d4;opacity:0.5"></div><div style="position:absolute;left:1176px;top:39px;width:4px;height:1px;background:#569cd6;opacity:0.5"></div><div style="position:absolute;left:1180px;top:39px;width:1px;height:1px;background:#d4d4d4;opacity:0.5"></div><div style="position:absolute;left:1182px;top:39px;width:14px;height:1px;background:#ce9178;opacity:0.5"></div><div style="position:absolute;left:1174px;top:41px;width:4px;height:1px;background:#569cd6;opacity:0.5"></div><div style="position:absolute;left:1178px;top:41px;width:1px;height:1px;background:#d4d4d4;opacity:0.5"></div><div style="position:absolute;left:1176px;top:43px;width:8px;height:1px;background:#569cd6;opacity:0.5"></div><div style="position:absolute;left:1184px;top:43px;width:1px;height:1px;background:#d4d4d4;opacity:0.5"></div><div style="position:absolute;left:1178px;top:45px;width:11px;height:1px;background:#569cd6;opacity:0.5"></div><div style="position:absolute;left:1189px;top:45px;width:1px;height:1px;background:#d4d4d4;opacity:0.5"></div><div style="position:absolute;left:1180px;top:47px;width:3px;height:1px;background:#569cd6;opacity:0.5"></div><div style="position:absolute;left:1183px;top:47px;width:1px;height:1px;background:#d4d4d4;opacity:0.5"></div><div style="position:absolute;left:1185px;top:47px;width:14px;height:1px;background:#ce9178;opacity:0.5"></div><div style="position:absolute;left:1176px;top:49px;width:8px;height:1px;background:#569cd6;opacity:0.5"></div><div style="position:absolute;left:1184px;top:49px;width:1px;height:1px;background:#d4d4d4;opacity:0.5"></div><div style="position:absolute;left:1178px;top:51px;width:13px;height:1px;background:#569cd6;opacity:0.5"></div><div style="position:absolute;left:1191px;top:51px;width:1px;height:1px;background:#d4d4d4;opacity:0.5"></div><div style="position:absolute;left:1180px;top:53px;width:8px;height:1px;background:#569cd6;opacity:0.5"></div><div style="position:absolute;left:1188px;top:53px;width:1px;height:1px;background:#d4d4d4;opacity:0.5"></div><div style="position:absolute;left:1190px;top:53px;width:1px;height:1px;background:#b5cea8;opacity:0.5"></div><div style="position:absolute;left:1180px;top:55px;width:14px;height:1px;background:#569cd6;opacity:0.5"></div><div style="position:absolute;left:1194px;top:55px;width:1px;height:1px;background:#d4d4d4;opacity:0.5"></div><div style="position:absolute;left:1196px;top:55px;width:1px;height:1px;background:#b5cea8;opacity:0.5"></div><div style="position:absolute;left:1178px;top:57px;width:4px;height:1px;background:#569cd6;opacity:0.5"></div><div style="position:absolute;left:1182px;top:57px;width:1px;height:1px;background:#d4d4d4;opacity:0.5"></div><div style="position:absolute;left:1184px;top:57px;width:13px;height:1px;background:#ce9178;opacity:0.5"></div><div style="position:absolute;left:1176px;top:59px;width:8px;height:1px;background:#569cd6;opacity:0.5"></div><div style="position:absolute;left:1184px;top:59px;width:1px;height:1px;background:#d4d4d4;opacity:0.5"></div><div style="position:absolute;left:1178px;top:61px;width:8px;height:1px;background:#569cd6;opacity:0.5"></div><div style="position:absolute;left:1186px;top:61px;width:1px;height:1px;background:#d4d4d4;opacity:0.5"></div><div style="position:absolute;left:1180px;top:63px;width:6px;height:1px;background:#569cd6;opacity:0.5"></div><div style="position:absolute;left:1186px;top:63px;width:1px;height:1px;background:#d4d4d4;opacity:0.5"></div><div style="position:absolute;left:1182px;top:65px;width:3px;height:1px;background:#569cd6;opacity:0.5"></div><div style="position:absolute;left:1185px;top:65px;width:1px;height:1px;background:#d4d4d4;opacity:0.5"></div><div style="position:absolute;left:1187px;top:65px;width:14px;height:1px;background:#ce9178;opacity:0.5"></div><div style="position:absolute;left:1178px;top:67px;width:4px;height:1px;background:#569cd6;opacity:0.5"></div><div style="position:absolute;left:1182px;top:67px;width:1px;height:1px;background:#d4d4d4;opacity:0.5"></div><div style="position:absolute;left:1180px;top:69px;width:10px;height:1px;background:#569cd6;opacity:0.5"></div><div style="position:absolute;left:1190px;top:69px;width:1px;height:1px;background:#d4d4d4;opacity:0.5"></div><div style="position:absolute;left:1180px;top:71px;width:1px;height:1px;background:#d4d4d4;opacity:0.5"></div><div style="position:absolute;left:1182px;top:71px;width:4px;height:1px;background:#569cd6;opacity:0.5"></div><div style="position:absolute;left:1186px;top:71px;width:1px;height:1px;background:#d4d4d4;opacity:0.5"></div><div style="position:absolute;left:1188px;top:71px;width:14px;height:1px;background:#ce9178;opacity:0.5"></div><div style="position:absolute;left:1182px;top:73px;width:5px;height:1px;background:#569cd6;opacity:0.5"></div><div style="position:absolute;left:1187px;top:73px;width:1px;height:1px;background:#d4d4d4;opacity:0.5"></div><div style="position:absolute;left:1189px;top:73px;width:35px;height:1px;background:#ce9178;opacity:0.5"></div><div style="position:absolute;left:1182px;top:75px;width:5px;height:1px;background:#569cd6;opacity:0.5"></div><div style="position:absolute;left:1187px;top:75px;width:1px;height:1px;background:#d4d4d4;opacity:0.5"></div><div style="position:absolute;left:1182px;top:77px;width:1px;height:1px;background:#d4d4d4;opacity:0.5"></div><div style="position:absolute;left:1184px;top:77px;width:13px;height:1px;background:#569cd6;opacity:0.5"></div><div style="position:absolute;left:1197px;top:77px;width:1px;height:1px;background:#d4d4d4;opacity:0.5"></div><div style="position:absolute;left:1199px;top:77px;width:4px;height:1px;background:#b5cea8;opacity:0.5"></div><div style="position:absolute;left:1174px;top:79px;width:3px;height:1px;background:#d4d4d4;opacity:0.5"></div><div style="position:absolute;left:1174px;top:81px;width:4px;height:1px;background:#569cd6;opacity:0.5"></div><div style="position:absolute;left:1178px;top:81px;width:1px;height:1px;background:#d4d4d4;opacity:0.5"></div><div style="position:absolute;left:1180px;top:81px;width:7px;height:1px;background:#ce9178;opacity:0.5"></div><div style="position:absolute;left:1174px;top:83px;width:10px;height:1px;background:#569cd6;opacity:0.5"></div><div style="position:absolute;left:1184px;top:83px;width:1px;height:1px;background:#d4d4d4;opacity:0.5"></div><div style="position:absolute;left:1186px;top:83px;width:2px;height:1px;background:#ce9178;opacity:0.5"></div><div style="position:absolute;left:1174px;top:85px;width:8px;height:1px;background:#569cd6;opacity:0.5"></div><div style="position:absolute;left:1182px;top:85px;width:1px;height:1px;background:#d4d4d4;opacity:0.5"></div><div style="position:absolute;left:1176px;top:87px;width:4px;height:1px;background:#569cd6;opacity:0.5"></div><div style="position:absolute;left:1180px;top:87px;width:1px;height:1px;background:#d4d4d4;opacity:0.5"></div><div style="position:absolute;left:1182px;top:87px;width:14px;height:1px;background:#ce9178;opacity:0.5"></div><div style="position:absolute;left:1174px;top:89px;width:4px;height:1px;background:#569cd6;opacity:0.5"></div><div style="position:absolute;left:1178px;top:89px;width:1px;height:1px;background:#d4d4d4;opacity:0.5"></div><div style="position:absolute;left:1176px;top:91px;width:8px;height:1px;background:#569cd6;opacity:0.5"></div><div style="position:absolute;left:1184px;top:91px;width:1px;height:1px;background:#d4d4d4;opacity:0.5"></div><div style="position:absolute;left:1178px;top:93px;width:3px;height:1px;background:#569cd6;opacity:0.5"></div><div style="position:absolute;left:1181px;top:93px;width:1px;height:1px;background:#d4d4d4;opacity:0.5"></div><div style="position:absolute;left:1183px;top:93px;width:14px;height:1px;background:#ce9178;opacity:0.5"></div><div style="position:absolute;left:1176px;top:95px;width:5px;height:1px;background:#569cd6;opacity:0.5"></div><div style="position:absolute;left:1181px;top:95px;width:1px;height:1px;background:#d4d4d4;opacity:0.5"></div><div style="position:absolute;left:1176px;top:97px;width:1px;height:1px;background:#d4d4d4;opacity:0.5"></div><div style="position:absolute;left:1178px;top:97px;width:4px;height:1px;background:#569cd6;opacity:0.5"></div><div style="position:absolute;left:1182px;top:97px;width:1px;height:1px;background:#d4d4d4;opacity:0.5"></div><div style="position:absolute;left:1184px;top:97px;width:2px;height:1px;background:#b5cea8;opacity:0.5"></div><div style="position:absolute;left:1178px;top:99px;width:10px;height:1px;background:#569cd6;opacity:0.5"></div><div style="position:absolute;left:1188px;top:99px;width:1px;height:1px;background:#d4d4d4;opacity:0.5"></div><div style="position:absolute;left:1190px;top:99px;width:4px;height:1px;background:#b5cea8;opacity:0.5"></div><div style="position:absolute;left:1176px;top:101px;width:4px;height:1px;background:#569cd6;opacity:0.5"></div><div style="position:absolute;left:1180px;top:101px;width:1px;height:1px;background:#d4d4d4;opacity:0.5"></div><div style="position:absolute;left:1182px;top:101px;width:12px;height:1px;background:#ce9178;opacity:0.5"></div><div style="position:absolute;left:0;top:742px;width:1242px;height:1px;background:#424242"></div><div class="ptab" style="left:36px;top:743px;height:36px;line-height:35px;color:#969696">PROBLEMS</div><div class="ptab" style="left:130px;top:743px;height:36px;line-height:35px;color:#969696">OUTPUT</div><div class="ptab" style="left:211px;top:743px;height:36px;line-height:35px;color:#969696">DEBUG CONSOLE</div><div class="ptab" style="left:340px;top:743px;height:36px;line-height:35px;color:#e7e7e7">TERMINAL</div><div style="position:absolute;left:340px;top:774px;width:56px;height:1px;background:#e7e7e7"></div><div style="position:absolute;left:20px;top:784px;font-family:'Liberation Mono',monospace;font-size:13px;letter-spacing:-0.8px;line-height:18px;color:#cccccc;white-space:pre">PS C:\Users\t-yiqi\Documents\vs code tutorial\gs-spring-boot&gt; </div><div style="position:absolute;left:454px;top:784px;width:7px;height:16px;background:#cccccc"></div><div style="position:absolute;left:939px;top:751px;width:170px;height:21px;background:#3c3c3c;font-size:13px;color:#f0f0f0;line-height:21px;padding-left:5px">2: kubectl</div><svg style="left:1095px;top:751px" width="10" height="21"><path d="M1 8 L8 8 L4.5 14 Z" fill="#f0f0f0"/></svg><svg style="left:1125px;top:752px" width="18" height="18"><path d="M8 3 L8 15 M2 9 L14 9" stroke="#c5c5c5" stroke-width="2.2"/></svg><svg style="left:1156px;top:752px" width="18" height="18"><g fill="none" stroke="#c5c5c5" stroke-width="1.4"><rect x="2" y="3.5" width="13" height="11"/><path d="M8.5 3.5 L8.5 14.5"/></g><rect x="2" y="3" width="13" height="2" fill="#c5c5c5"/></svg><svg style="left:1187px;top:752px" width="18" height="18"><g fill="#c5c5c5"><rect x="3" y="4" width="12" height="1.6"/><rect x="6.5" y="2" width="5" height="2"/><path d="M4.5 6 L13.5 6 L12.8 16 L5.2 16 Z"/></g><g stroke="#1e1e1e" stroke-width="1"><path d="M7.5 8 L7.5 14 M9 8 L9 14 M10.5 8 L10.5 14"/></g></svg><svg style="left:1219px;top:752px" width="18" height="18"><path d="M3 12 L9 6 L15 12" fill="none" stroke="#c5c5c5" stroke-width="1.6"/></svg></div><div id="status"><svg style="left:11px;top:0" width="14" height="22"><g fill="none" stroke="#fff" stroke-width="1.3"><circle cx="4" cy="7.2" r="1.6"/><circle cx="9.6" cy="9" r="1.6"/><path d="M4 8.8 L4 18 M9.6 10.6 C9.6 13.5 4.5 13 4 16"/></g></svg><span style="left:25px">master*</span><svg style="left:79px;top:0" width="16" height="22"><g fill="none" stroke="#fff" stroke-width="1.9"><path d="M3 12.5 A5 5 0 0 1 11.8 9.2"/><path d="M13 13.5 A5 5 0 0 1 4.2 16.8"/></g><path d="M9.5 6.8 L13.8 6.2 L13.2 10.8 Z M6.5 19.2 L2.2 19.8 L2.8 15.2 Z" fill="#fff"/></svg><svg style="left:104px;top:0" width="14" height="22"><circle cx="6.4" cy="11.4" r="5.5" fill="#fff"/><path d="M4.2 9.2 L8.6 13.6 M8.6 9.2 L4.2 13.6" stroke="#007acc" stroke-width="1.5"/></svg><span style="left:119px">0</span><svg style="left:130px;top:0" width="14" height="22"><path d="M6.5 5.8 L12 16.5 L1 16.5 Z" fill="#fff"/><path d="M6.5 9.5 L6.5 13.2 M6.5 14.2 L6.5 15.6" stroke="#007acc" stroke-width="1.3"/></svg><span style="left:146px">0</span><span style="left:179px">Azure: t-yiqi@microsoft.com</span><span style="left:1570px;letter-spacing:-0.2px">Ln 10, Col 19</span><span style="left:1653px;letter-spacing:-0.3px">Spaces: 2</span><span style="left:1717px">UTF-8</span><span style="left:1764px;letter-spacing:-0.6px">CRLF</span><span style="left:1804px">YAML</span></div></body></html>
